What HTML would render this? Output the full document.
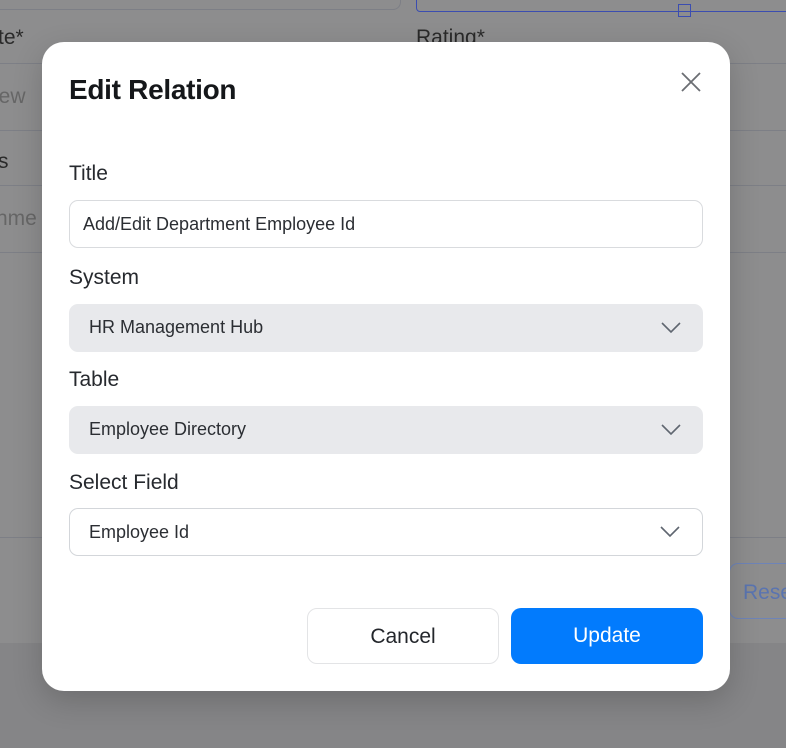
<!DOCTYPE html>
<html><head><meta charset="utf-8"><style>
*{box-sizing:border-box;margin:0;padding:0}
body{width:786px;height:748px;overflow:hidden;background:#8d8d8e;font-family:"Liberation Sans",sans-serif;position:relative}
.abs{position:absolute}
.bgt{position:absolute;font-size:21px;color:#1f1f1f;opacity:.55}
.line{position:absolute;height:1px;background:#7d7f86}
.modal{position:absolute;left:42px;top:42px;width:688px;height:649px;background:#fff;border-radius:22px;box-shadow:0 10px 30px rgba(0,0,0,.18)}
h1{position:absolute;left:27px;top:32px;font-size:28px;font-weight:bold;color:#15171a;letter-spacing:-.3px}
.lbl{position:absolute;left:27px;font-size:21px;color:#26292e}
.fld{position:absolute;left:27px;width:634px;height:48px;border-radius:9px;font-size:18px;color:#2b2e33;padding-left:20px;line-height:47px}
.fld.in{border:1px solid #d9dbde;padding-left:13px}
.fld.sel{background:#e8e9ec}
.fld.wsel{border:1px solid #d3d6da}
.chev{position:absolute;right:22px;top:18px}
.btn{position:absolute;top:566px;width:192px;height:56px;border-radius:10px;font-size:21px;text-align:center;line-height:56px}
</style></head><body>
<div class="abs" style="left:-10px;top:-20px;width:411px;height:30px;border:1px solid #7d7f86;border-radius:8px"></div>
<div class="abs" style="left:416px;top:-10px;width:380px;height:22px;border:1px solid #3b4db0;border-radius:4px"></div>
<div class="abs" style="left:678px;top:4px;width:13px;height:13px;border:1px solid #3b4db0"></div>
<div class="bgt" style="left:-2px;top:26px;color:#111;opacity:.8">te*</div>
<div class="bgt" style="left:416px;top:26px;color:#111;opacity:.8">Rating*</div>
<div class="bgt" style="left:-6px;top:85px;opacity:.35">iew</div>
<div class="bgt" style="left:-2px;top:150px;color:#111;opacity:.8">s</div>
<div class="bgt" style="left:-4px;top:207px;opacity:.35">nme</div>
<div class="line" style="left:0;top:63px;width:786px"></div>
<div class="line" style="left:0;top:130px;width:786px"></div>
<div class="line" style="left:0;top:185px;width:786px"></div>
<div class="line" style="left:0;top:252px;width:786px"></div>
<div class="line" style="left:0;top:537px;width:786px"></div>
<div class="abs" style="left:729px;top:563px;width:80px;height:56px;border:1px solid #6e84b8;border-radius:9px;color:#5a74b0;font-size:21px;padding:17px 0 0 13px">Rese</div>
<div class="abs" style="left:0;top:643px;width:786px;height:105px;background:#858587"></div>
<div class="modal">
<h1>Edit Relation</h1>
<svg class="abs" style="left:638px;top:29px" width="22" height="22" viewBox="0 0 22 22"><path d="M2 2L20 20M20 2L2 20" stroke="#6b6e73" stroke-width="1.8"/></svg>
<div class="lbl" style="top:120px">Title</div>
<div class="fld in" style="top:158px">Add/Edit Department Employee Id</div>
<div class="lbl" style="top:224px">System</div>
<div class="fld sel" style="top:262px">HR Management Hub<svg class="chev" width="20" height="12" viewBox="0 0 20 12"><path d="M1 1L10 10L19 1" fill="none" stroke="#5f6670" stroke-width="1.6"/></svg></div>
<div class="lbl" style="top:326px">Table</div>
<div class="fld sel" style="top:364px">Employee Directory<svg class="chev" width="20" height="12" viewBox="0 0 20 12"><path d="M1 1L10 10L19 1" fill="none" stroke="#5f6670" stroke-width="1.6"/></svg></div>
<div class="lbl" style="top:429px">Select Field</div>
<div class="fld wsel" style="top:466px;line-height:46px;padding-left:19px">Employee Id<svg class="chev" width="20" height="12" viewBox="0 0 20 12" style="top:17px"><path d="M1 1L10 10L19 1" fill="none" stroke="#5f6670" stroke-width="1.6"/></svg></div>
<div class="btn" style="left:265px;border:1px solid #e3e4e6;color:#23262b">Cancel</div>
<div class="btn" style="left:469px;background:#027bfd;color:#fff">Update</div>
</div>
</body></html>
